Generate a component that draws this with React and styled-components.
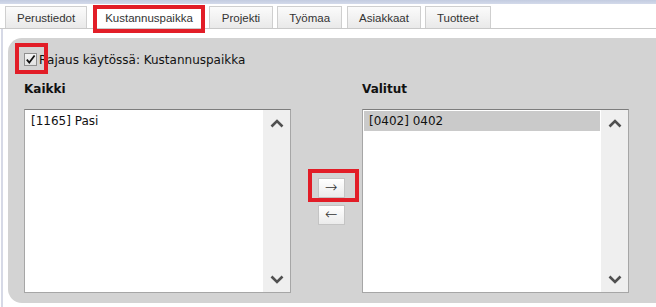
import React from "react";
import styled, { createGlobalStyle } from "styled-components";

const GlobalStyle = createGlobalStyle`
  html, body {
    margin: 0;
    padding: 0;
    background: #ffffff;
    overflow: hidden;
  }
  body {
    font-family: "DejaVu Sans", Verdana, sans-serif;
    font-size: 12px;
    color: #111;
  }
`;

const Page = styled.div`
  width: 656px;
  height: 307px;
  display: flex;
  flex-direction: column;
  overflow: hidden;
`;

const TopBar = styled.div`
  height: 4px;
  background: linear-gradient(#c3cce0, #d3daea);
`;

const TabStrip = styled.div`
  display: flex;
  align-items: flex-end;
  gap: 4px;
  height: 24px;
  padding-left: 5px;
  border-bottom: 1px solid #c9c9c9;
`;

const Tab = styled.div`
  position: relative;
  height: 22px;
  box-sizing: border-box;
  padding: 0 ${(p) => p.$pad}px;
  margin-right: ${(p) => p.$gap || 0}px;
  display: flex;
  align-items: center;
  font-family: "Liberation Sans", Arial, sans-serif;
  font-size: 11.5px;
  color: #333;
  border: 1px solid #cfcfcf;
  border-bottom: none;
  background: ${(p) =>
    p.$active ? "#ffffff" : "linear-gradient(#fbfbfb, #e9e9e9)"};
`;

const Highlight = styled.div`
  position: absolute;
  box-sizing: border-box;
  border: 4px solid #e21d27;
  pointer-events: none;
  left: ${(p) => p.$l}px;
  top: ${(p) => p.$t}px;
  width: ${(p) => p.$w}px;
  height: ${(p) => p.$h}px;
`;

const Frame = styled.div`
  flex: 1;
  margin-left: 1px;
  border-left: 2px solid #d6d9e6;
  padding: 9px 0 4px 5px;
  display: flex;
`;

const Panel = styled.div`
  flex: 1;
  margin-right: -14px;
  background: #d3d3d3;
  border-radius: 14px;
  padding: 15px 0 9px 16px;
  display: flex;
  flex-direction: column;
`;

const CheckRow = styled.label`
  display: flex;
  align-items: center;
  gap: 2px;
  height: 13px;
  font-size: 12px;
  color: #111;
`;

const CheckBox = styled.span`
  position: relative;
  width: 13px;
  height: 13px;
  box-sizing: border-box;
  border: 1px solid #8f8f8f;
  background: linear-gradient(#f4f4f4, #e2e2e2);
  display: flex;
  align-items: center;
  justify-content: center;
`;

const Columns = styled.div`
  display: grid;
  grid-template-columns: 267px 71px 267px;
  grid-template-rows: auto 184px;
  margin-top: 16px;
`;

const ColumnTitle = styled.div`
  font-weight: bold;
  font-size: 12px;
  height: 14px;
  line-height: 14px;
  margin-bottom: 13px;
  grid-column: ${(p) => p.$col};
`;

const ListBox = styled.div`
  box-sizing: border-box;
  background: #fff;
  border: 1px solid #a6a6a6;
  border-top-color: #7d7d7d;
  display: flex;
`;

const Options = styled.div`
  flex: 1;
  padding: 1px;
`;

const Option = styled.div`
  height: 20px;
  line-height: 21px;
  padding-left: 5px;
  background: ${(p) => (p.$selected ? "#cacaca" : "transparent")};
  font-size: 12px;
  color: #111;
  white-space: nowrap;
`;

const ScrollBar = styled.div`
  width: 27px;
  background: #efefef;
  display: flex;
  flex-direction: column;
  justify-content: space-between;
  align-items: center;
  padding: 9px 0 8px;
`;

const Middle = styled.div`
  display: flex;
  flex-direction: column;
  align-items: center;
  justify-content: center;
  gap: 7px;
  padding-left: 9px;
`;

const MoveButton = styled.div`
  position: relative;
  width: 27px;
  height: 20px;
  box-sizing: border-box;
  border: 1px solid #c4c4c4;
  background: linear-gradient(#ffffff, #ebebeb);
  display: flex;
  align-items: center;
  justify-content: center;
  font-family: "DejaVu Sans", sans-serif;
  font-size: 15px;
  font-weight: 200;
  line-height: 1;
  color: #333;
`;

const Chevron = ({ up }) => (
  <svg width="14" height="9" viewBox="0 0 14 9">
    <path
      d={up ? "M1.5 7.5 L7 2 L12.5 7.5" : "M1.5 1.5 L7 7 L12.5 1.5"}
      fill="none"
      stroke="#505050"
      strokeWidth="2.6"
    />
  </svg>
);

const Check = () => (
  <svg width="11" height="11" viewBox="0 0 11 11">
    <path
      d="M1.8 5.6 L4.3 8.6 L9.6 1.6"
      fill="none"
      stroke="#111"
      strokeWidth="1.7"
    />
  </svg>
);

const List = ({ items }) => (
  <ListBox>
    <Options>
      {items.map((item) => (
        <Option key={item.label} $selected={item.selected}>
          {item.label}
        </Option>
      ))}
    </Options>
    <ScrollBar>
      <Chevron up />
      <Chevron />
    </ScrollBar>
  </ListBox>
);

const tabs = [
  { label: "Perustiedot", pad: 11, gap: 2 },
  { label: "Kustannuspaikka", pad: 11, active: true },
  { label: "Projekti", pad: 12 },
  { label: "Työmaa", pad: 11, gap: 1 },
  { label: "Asiakkaat", pad: 11 },
  { label: "Tuotteet", pad: 11 },
];

export default function App() {
  return (
    <>
      <GlobalStyle />
      <Page>
        <TopBar />
        <TabStrip>
          {tabs.map((t) => (
            <Tab key={t.label} $pad={t.pad} $gap={t.gap} $active={t.active}>
              {t.label}
              {t.active && <Highlight $l={-1} $t={-2} $w={112} $h={28} />}
            </Tab>
          ))}
        </TabStrip>
        <Frame>
          <Panel>
            <CheckRow>
              <CheckBox>
                <Check />
                <Highlight $l={-10} $t={-11} $w={33} $h={31} />
              </CheckBox>
              Rajaus käytössä: Kustannuspaikka
            </CheckRow>
            <Columns>
              <ColumnTitle $col={1}>Kaikki</ColumnTitle>
              <ColumnTitle $col={3}>Valitut</ColumnTitle>
              <List items={[{ label: "[1165] Pasi" }]} />
              <Middle>
                <MoveButton>
                  →
                  <Highlight $l={-11} $t={-10} $w={51} $h={33} />
                </MoveButton>
                <MoveButton>←</MoveButton>
              </Middle>
              <List items={[{ label: "[0402] 0402", selected: true }]} />
            </Columns>
          </Panel>
        </Frame>
      </Page>
    </>
  );
}
